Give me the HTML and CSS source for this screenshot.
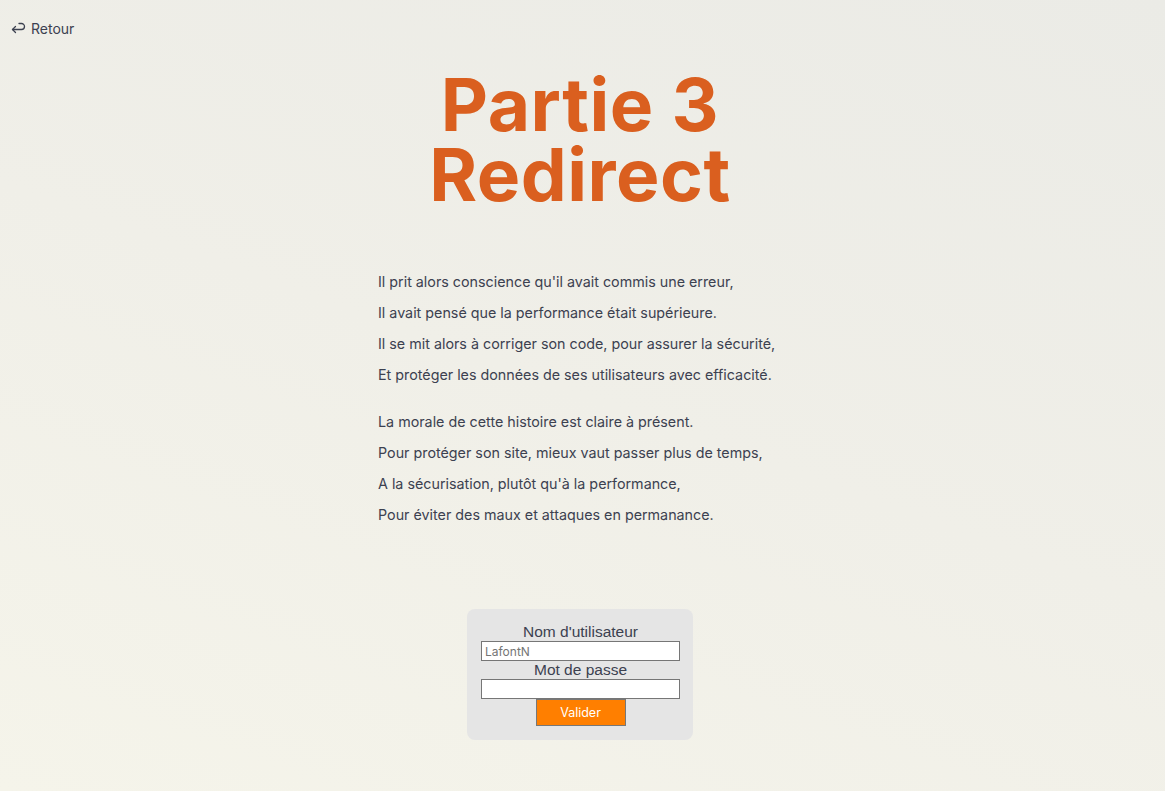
FILE: index.html
```html
<!DOCTYPE html>
<html lang="fr">
<head>
<meta charset="utf-8">
<title>Partie 3 - Redirect</title>
<link rel="stylesheet" href="styles.css">
</head>
<body>
<header class="top">
  <a class="back" href="#">
    <svg class="back-icon" width="15" height="12" viewBox="0 0 15 12" fill="none" stroke="currentColor" stroke-width="1.3" stroke-linecap="round" stroke-linejoin="round">
      <path d="M4.5 4.5 L1.5 7.5 L4.5 10.5"/>
      <path d="M1.5 7.5 H10.5 A3 3 0 0 0 10.5 1.5 H8"/>
    </svg>
    <span>Retour</span>
  </a>
</header>
<main class="page">
  <h1 class="title"><span class="title-line">Partie 3</span><span class="title-line">Redirect</span></h1>
  <section class="poem">
    <div class="stanza">
      <p>Il prit alors conscience qu'il avait commis une erreur,</p>
      <p>Il avait pensé que la performance était supérieure.</p>
      <p>Il se mit alors à corriger son code, pour assurer la sécurité,</p>
      <p>Et protéger les données de ses utilisateurs avec efficacité.</p>
    </div>
    <div class="stanza">
      <p>La morale de cette histoire est claire à présent.</p>
      <p>Pour protéger son site, mieux vaut passer plus de temps,</p>
      <p>A la sécurisation, plutôt qu'à la performance,</p>
      <p>Pour éviter des maux et attaques en permanance.</p>
    </div>
  </section>
  <form class="login">
    <label for="user">Nom d'utilisateur</label>
    <input id="user" type="text" placeholder="LafontN">
    <label for="pass">Mot de passe</label>
    <input id="pass" type="password">
    <button type="button">Valider</button>
  </form>
</main>
</body>
</html>
```
FILE: styles.css
```css
html, body {
  margin: 0;
  padding: 0;
}
body {
  min-height: 791px;
  background: linear-gradient(20deg, #f5f4ea 0%, #f0efe8 50%, #ebebe6 100%);
  font-family: Inter, "Liberation Sans", sans-serif;
  color: #3c4150;
}
.top {
  padding: 18px 11px 0;
  height: 21px;
}
.back {
  display: inline-flex;
  align-items: center;
  gap: 5px;
  color: #3c4150;
  text-decoration: none;
  font-size: 14px;
}
.back-icon {
  display: block;
}
.page {
  display: flex;
  flex-direction: column;
  align-items: center;
  padding-right: 5px;
}
.title {
  margin: 31px 0 0;
  font-family: Inter, "Liberation Sans", sans-serif;
  font-weight: 700;
  font-size: 73px;
  color: #da5f1f;
  text-align: center;
  letter-spacing: 0.5px;
}
.title-line {
  display: block;
  height: 70px;
  line-height: 70px;
}
.poem {
  margin-top: 62px;
  width: 404px;
  font-size: 14.3px;
  line-height: 20px;
}
.stanza {
  margin-bottom: 27px;
}
.stanza p {
  margin: 0 0 11px;
}
.login {
  margin-top: 57px;
  width: 226px;
  box-sizing: border-box;
  padding: 14px 13px 14px 14px;
  background: #e5e5e5;
  border-radius: 8px;
  display: flex;
  flex-direction: column;
  align-items: center;
  font-family: "Liberation Sans", Arial, sans-serif;
}
.login label {
  font-size: 15.5px;
  line-height: 18px;
  color: #3c4150;
}
.login input {
  width: 199px;
  height: 20px;
  box-sizing: border-box;
  margin: 0;
  padding: 1px 3px;
  border: 1px solid #767676;
  background: #fff;
  font-family: Inter, "Liberation Sans", sans-serif;
  font-size: 12px;
}
.login input::placeholder {
  color: #757575;
}
.login button {
  width: 90px;
  height: 27px;
  margin-top: 0;
  background: #ff7f00;
  color: #fff;
  border: 1px solid #777;
  font-family: Inter, "Liberation Sans", sans-serif;
  font-size: 12.5px;
}
```
